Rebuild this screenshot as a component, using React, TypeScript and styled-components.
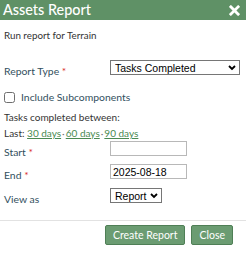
import React from 'react';
import styled, { createGlobalStyle } from 'styled-components';

const GlobalStyle = createGlobalStyle`
  html, body {
    margin: 0;
    padding: 0;
    background: #ffffff;
  }
  body {
    font-family: Lato, "Liberation Sans", sans-serif;
  }
`;

const Dialog = styled.div`
  width: 246px;
  height: 254px;
  display: flex;
  flex-direction: column;
  background: #ffffff;
  box-sizing: border-box;
  overflow: hidden;
`;

const TitleBar = styled.div`
  height: 20px;
  display: flex;
  align-items: center;
  justify-content: space-between;
  padding: 0 6px 0 3px;
  background: #5f9166;
  color: #ffffff;
  box-sizing: border-box;
`;

const Title = styled.h1`
  margin: 0;
  font-size: 14.4px;
  font-weight: 500;
  line-height: 20px;
`;

const CloseIcon = styled.svg`
  width: 11px;
  height: 11px;
`;

const Body = styled.div`
  flex: 1;
  display: flex;
  flex-direction: column;
  padding: 9px 4px 0 4px;
  font-size: 10px;
  color: #333333;
`;

const Intro = styled.p`
  margin: 0 0 18px 0;
  font-size: 9.8px;
  line-height: 13px;
`;

const FieldRow = styled.div<{ $mb?: number }>`
  display: grid;
  grid-template-columns: 106px auto;
  align-items: start;
  height: 18px;
  margin-bottom: ${(p) => p.$mb ?? 0}px;
`;

const Label = styled.label`
  color: #33505e;
  font-size: 10.4px;
  line-height: 14px;
  padding-top: 4px;
`;

const Req = styled.span`
  color: #d9302c;
`;

const Select = styled.select<{ $w: number }>`
  width: ${(p) => p.$w}px;
  height: 15px;
  font-family: "Liberation Sans", Arial, sans-serif;
  font-size: 10.5px;
  color: #000000;
  border: 1px solid #767676;
  border-radius: 0;
  background: #ffffff;
  padding: 0 0 0 4px;
  box-sizing: border-box;
  appearance: none;
  background-image: url("data:image/svg+xml;utf8,<svg xmlns='http://www.w3.org/2000/svg' width='8' height='6' viewBox='0 0 8 6'><path d='M1 1 L4 4 L7 1' stroke='black' stroke-width='1.8' fill='none'/></svg>");
  background-repeat: no-repeat;
  background-position: right 3px center;
`;

const TextInput = styled.input`
  width: 77px;
  height: 15px;
  font-family: "Liberation Sans", Arial, sans-serif;
  font-size: 10.5px;
  color: #000000;
  border: 1px solid #b8b8b8;
  border-radius: 0;
  padding: 0 2px;
  box-sizing: border-box;
`;

const CheckRow = styled.label`
  display: flex;
  align-items: center;
  gap: 6px;
  height: 12px;
  margin: 13px 0 6px 0;
  color: #33505e;
  font-size: 10.4px;
`;

const CheckBox = styled.span`
  width: 11px;
  height: 11px;
  border: 1px solid #6e6e6e;
  border-radius: 2.5px;
  background: #ffffff;
  box-sizing: border-box;
`;

const Line = styled.div`
  line-height: 16px;
`;

const DayLink = styled.a`
  color: #4a8a52;
  text-decoration: underline;
`;

const Dot = styled.span`
  color: #777777;
  margin: 0 1px;
`;

const Footer = styled.div`
  margin-top: auto;
  border-top: 1px solid #e2e2e2;
  display: flex;
  justify-content: flex-end;
  gap: 6px;
  padding: 4px 13px 9px 0;
`;

const Button = styled.button`
  height: 20px;
  padding: 0 7px;
  font-family: Lato, "Liberation Sans", sans-serif;
  font-size: 10.5px;
  color: #ffffff;
  background: #6b9c72;
  border: 1px solid #4f7f56;
  border-radius: 2px;
`;

export default function App() {
  return (
    <>
      <GlobalStyle />
      <Dialog>
        <TitleBar>
          <Title>Assets Report</Title>
          <CloseIcon viewBox="0 0 12 12">
            <path d="M2 2 L10 10 M10 2 L2 10" stroke="#ffffff" strokeWidth="3" strokeLinecap="square" />
          </CloseIcon>
        </TitleBar>
        <Body>
          <Intro>Run report for Terrain</Intro>
          <FieldRow>
            <Label>
              Report Type <Req>*</Req>
            </Label>
            <Select $w={130} defaultValue="tasks">
              <option value="tasks">Tasks Completed</option>
            </Select>
          </FieldRow>
          <CheckRow>
            <CheckBox />
            Include Subcomponents
          </CheckRow>
          <Line>Tasks completed between:</Line>
          <Line>
            Last: <DayLink>30 days</DayLink>
            <Dot>·</Dot>
            <DayLink>60 days</DayLink>
            <Dot>·</Dot>
            <DayLink>90 days</DayLink>
          </Line>
          <FieldRow $mb={5}>
            <Label>
              Start <Req>*</Req>
            </Label>
            <TextInput defaultValue="" />
          </FieldRow>
          <FieldRow $mb={6}>
            <Label>
              End <Req>*</Req>
            </Label>
            <TextInput defaultValue="2025-08-18" />
          </FieldRow>
          <FieldRow>
            <Label>View as</Label>
            <Select $w={52} defaultValue="report">
              <option value="report">Report</option>
            </Select>
          </FieldRow>
        </Body>
        <Footer>
          <Button>Create Report</Button>
          <Button>Close</Button>
        </Footer>
      </Dialog>
    </>
  );
}
